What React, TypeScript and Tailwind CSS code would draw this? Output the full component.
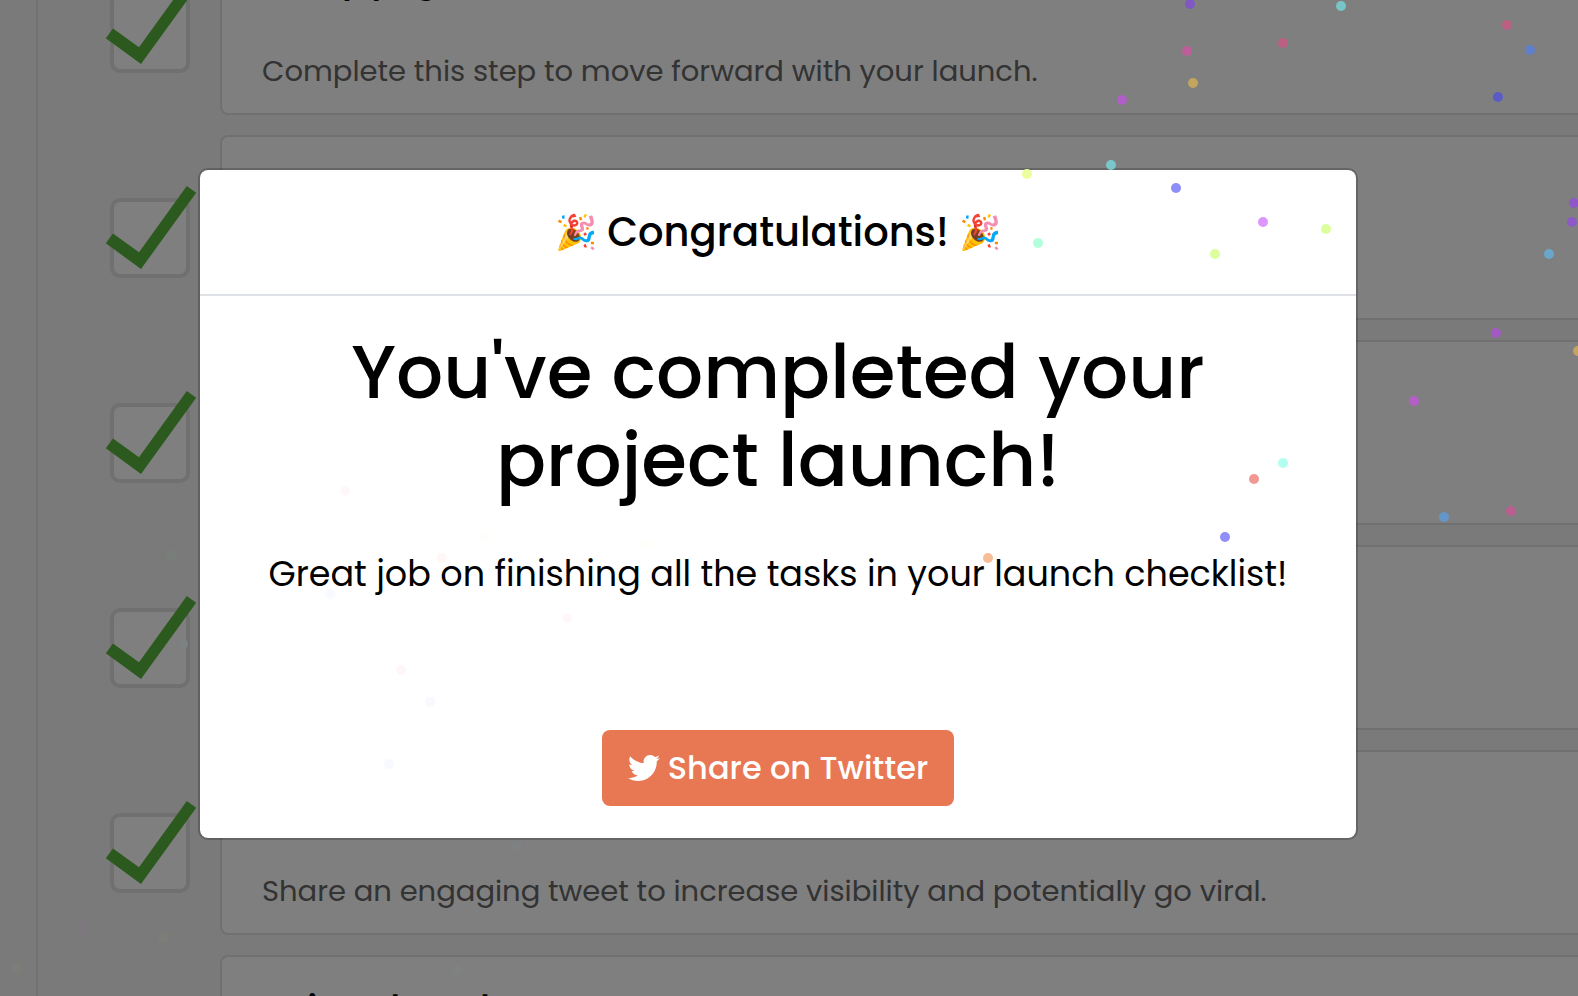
import { FaTwitter } from 'react-icons/fa';

type Task = { id: string; title: string; text: string };

const tasks: Task[] = [
  { id: 'pages', title: 'Set up pages', text: 'Complete this step to move forward with your launch.' },
  { id: 'step-2', title: '', text: '' },
  { id: 'step-3', title: '', text: '' },
  { id: 'step-4', title: '', text: '' },
  { id: 'tweet', title: '', text: 'Share an engaging tweet to increase visibility and potentially go viral.' },
  { id: 'ads', title: 'Write ads and', text: '' },
];

const confetti: [number, number, string][] = [
  [1190, 4, '#7f58c4'],
  [1341, 6, '#78c5c8'],
  [1507, 25, '#bb5f83'],
  [1530, 50, '#5f80c8'],
  [1283, 43, '#bb5f83'],
  [1187, 51, '#bd5e9b'],
  [1193, 83, '#c4a55f'],
  [1122, 100, '#b15fc6'],
  [1498, 97, '#5a5cc5'],
  [1111, 165, '#79c7cb'],
  [1027, 174, '#ecff9d'],
  [1176, 188, '#8e8ef8'],
  [1263, 222, '#dd96fb'],
  [1326, 229, '#dcff9e'],
  [1038, 243, '#b2ffd9'],
  [1215, 254, '#dcff9e'],
  [1574, 203, '#8f58c8'],
  [1572, 222, '#8f58c8'],
  [1549, 254, '#6aa5ca'],
  [1496, 333, '#a45ac5'],
  [1578, 351, '#c4a55f'],
  [1414, 401, '#b45fc6'],
  [1283, 463, '#b2fff0'],
  [1254, 479, '#f29893'],
  [1444, 517, '#6496c8'],
  [1511, 511, '#bb5f93'],
  [1225, 537, '#908ef8'],
  [988, 558, '#f7bd96'],
  [646, 544, '#fefffb'],
  [567, 618, '#fff7fb'],
  [345, 491, '#fff7fa'],
  [485, 537, '#fdfffb'],
  [442, 558, '#fff6f7'],
  [330, 594, '#f8faff'],
  [401, 670, '#fff6f9'],
  [430, 702, '#f8f9ff'],
  [389, 764, '#f8f8ff'],
  [171, 555, '#787f7a'],
  [183, 644, '#7c8182'],
  [82, 928, '#7d787e'],
  [163, 938, '#7d7d78'],
  [17, 969, '#7d7d78'],
  [517, 846, '#7e8283'],
  [457, 970, '#7e8282'],
];

function TaskRow({ task }: { task: Task }) {
  return (
    <li className="flex items-start gap-[30px]">
      <span className="relative mt-[63px] block size-20 shrink-0">
        <input
          type="checkbox"
          id={task.id}
          aria-label={task.title || 'Launch step'}
          defaultChecked
          className="block size-20 appearance-none rounded-[10px] border-4 border-[#e0e0e0] bg-white"
        />
        <svg className="pointer-events-none absolute inset-0 size-20 overflow-visible" viewBox="0 0 80 80" aria-hidden="true">
          <polygon points="3,35.5 -4.2,45.3 31,71 86.2,-5.2 76.8,-12 29,54.3" fill="#58b43c" />
        </svg>
      </span>
      <label
        htmlFor={task.id}
        className="block h-[185px] min-w-0 grow rounded-l-lg border-2 border-r-0 border-[#e0e0e0] bg-white px-10 pt-[26px] pb-5"
      >
        <span className="block h-12 text-[32px] leading-[48px] font-semibold text-black">{task.title}</span>
        <span className="mt-11 block text-[29px] leading-[43px] text-[#666]">{task.text}</span>
      </label>
    </li>
  );
}

function Confetti() {
  return (
    <svg className="pointer-events-none absolute inset-0 size-full" aria-hidden="true">
      {confetti.map(([x, y, color]) => (
        <circle key={`${x}-${y}`} cx={x} cy={y} r="5" fill={color} />
      ))}
    </svg>
  );
}

export default function App() {
  return (
    <div className="relative h-screen overflow-hidden bg-[#f4f4f4] pl-9 font-[Poppins,Inter,sans-serif]">
      <main className="flow-root h-full border-l-2 border-[#e5e5e5] pl-[72px]">
        <ul className="-mt-[70px] flex flex-col gap-5">
          {tasks.map((task) => (
            <TaskRow key={task.id} task={task} />
          ))}
        </ul>
      </main>

      <div className="absolute inset-0 flex items-start justify-center bg-black/50 pt-[168px] pr-[22px]">
        <section
          role="dialog"
          aria-modal="true"
          aria-labelledby="dialog-title"
          className="w-full max-w-[1160px] rounded-[10px] border-2 border-black/20 bg-white bg-clip-padding text-center text-black"
        >
          <header className="border-b-2 border-[#dee2e6] p-8">
            <h2 id="dialog-title" className="flex items-center justify-center gap-2.5 text-[40px] leading-[60px] font-medium">
              <span className="text-[34px] leading-[56px]">🎉</span>
              <span>Congratulations!</span>
              <span className="text-[34px] leading-[56px]">🎉</span>
            </h2>
          </header>
          <div className="flex flex-col items-center p-8">
            <h1 className="max-w-[1000px] text-[74px] leading-[88px] font-medium">You've completed your project launch!</h1>
            <p className="mt-11 text-[35px] leading-[52px]">Great job on finishing all the tasks in your launch checklist!</p>
            <button
              type="button"
              className="mt-[130px] flex h-[76px] items-center gap-2 rounded-lg bg-[#e87753] px-[26px] text-[32px] leading-[48px] font-medium text-white"
            >
              <FaTwitter className="size-8" aria-hidden="true" />
              Share on Twitter
            </button>
          </div>
        </section>
      </div>

      <Confetti />
    </div>
  );
}
